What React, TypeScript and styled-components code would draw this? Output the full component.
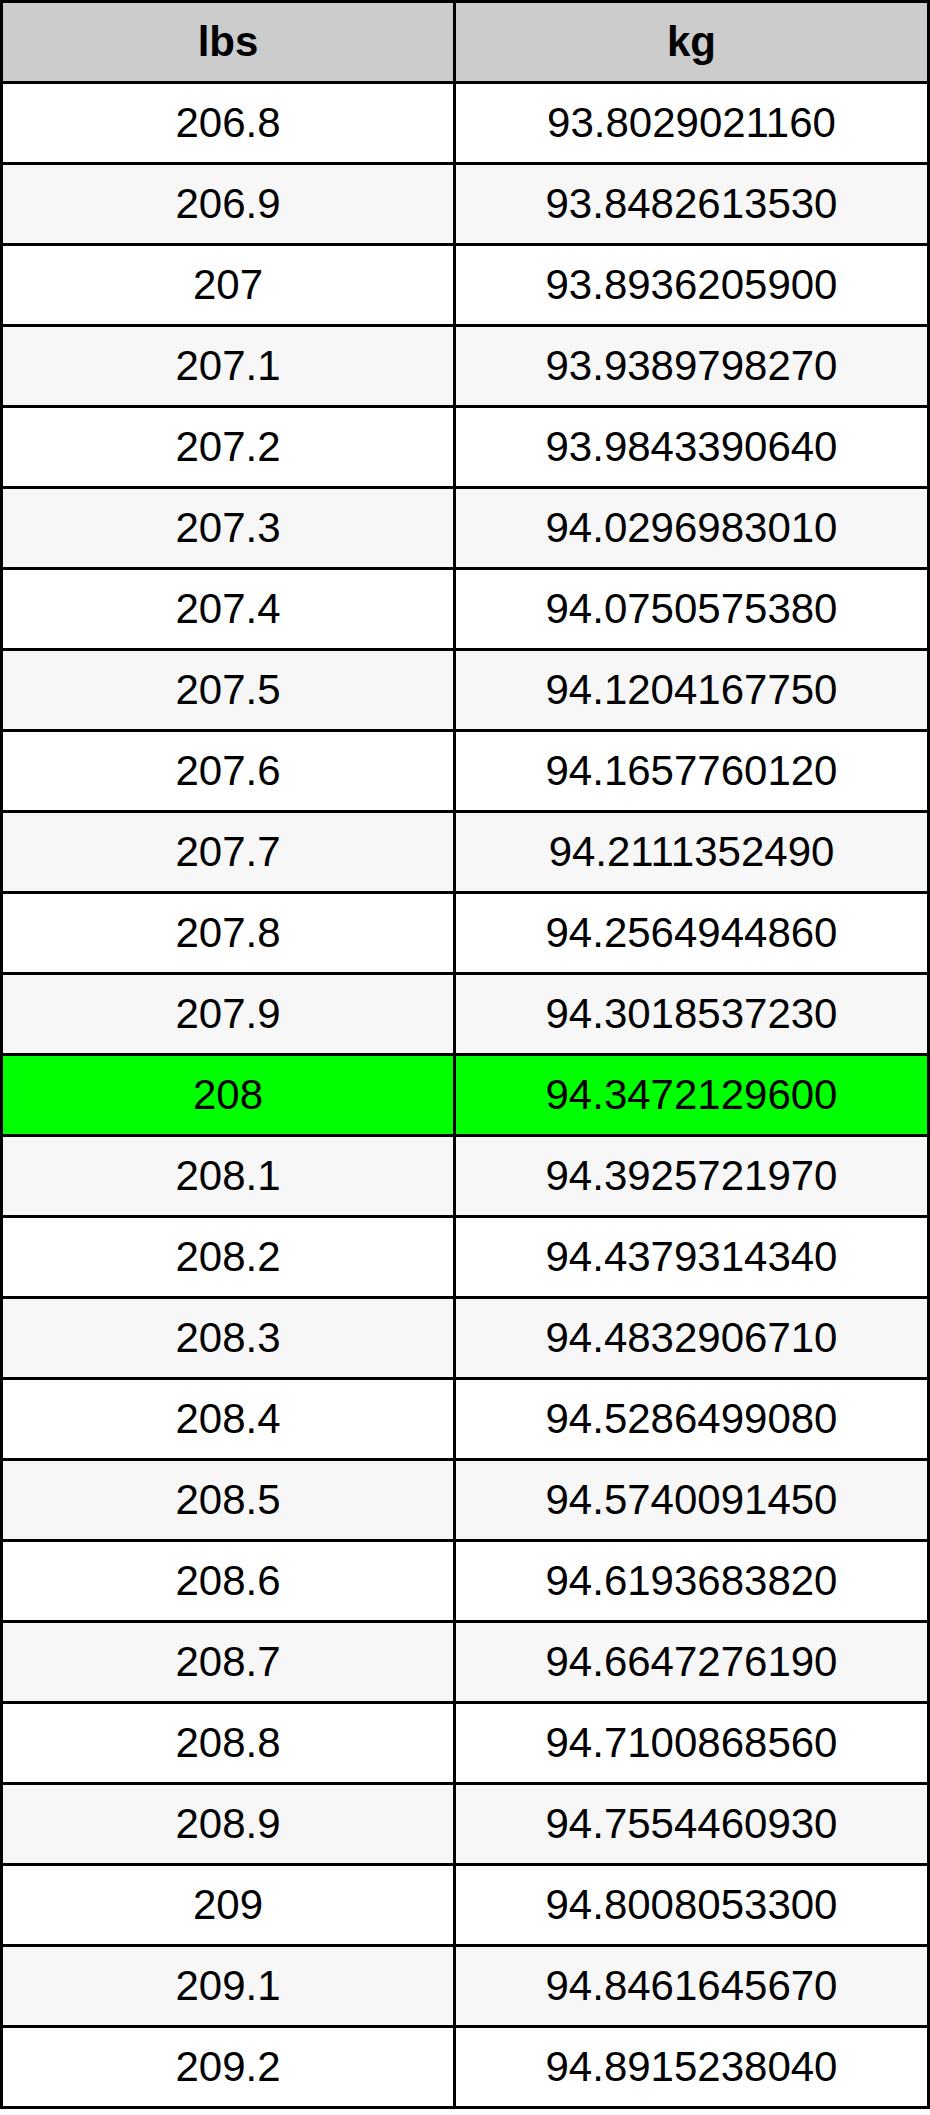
import { createGlobalStyle } from 'styled-components';
import styled from 'styled-components';

const GlobalStyle = createGlobalStyle`
  html, body {
    margin: 0;
    padding: 0;
    background: #ffffff;
  }
  body {
    font-family: "Liberation Sans", Arial, sans-serif;
  }
`;

const Table = styled.table`
  width: 930px;
  border-collapse: collapse;
  table-layout: fixed;
  border: 3px solid #000;
  font-family: "Liberation Sans", Arial, sans-serif;
  font-size: 42px;
  color: #000;
`;

const HeadCell = styled.th`
  height: 78px;
  padding: 0;
  border: 3px solid #000;
  background-color: #cccccc;
  font-weight: bold;
  text-align: center;
  vertical-align: middle;
`;

const Row = styled.tr<{ $striped: boolean; $highlight: boolean }>`
  background-color: ${(p) => (p.$highlight ? '#00ff00' : p.$striped ? '#f7f7f7' : '#ffffff')};
`;

const Cell = styled.td`
  height: 78px;
  padding: 0;
  border: 3px solid #000;
  text-align: center;
  vertical-align: middle;
  font-weight: normal;
`;

const rows: [string, string][] = [
  ['206.8', '93.8029021160'],
  ['206.9', '93.8482613530'],
  ['207', '93.8936205900'],
  ['207.1', '93.9389798270'],
  ['207.2', '93.9843390640'],
  ['207.3', '94.0296983010'],
  ['207.4', '94.0750575380'],
  ['207.5', '94.1204167750'],
  ['207.6', '94.1657760120'],
  ['207.7', '94.2111352490'],
  ['207.8', '94.2564944860'],
  ['207.9', '94.3018537230'],
  ['208', '94.3472129600'],
  ['208.1', '94.3925721970'],
  ['208.2', '94.4379314340'],
  ['208.3', '94.4832906710'],
  ['208.4', '94.5286499080'],
  ['208.5', '94.5740091450'],
  ['208.6', '94.6193683820'],
  ['208.7', '94.6647276190'],
  ['208.8', '94.7100868560'],
  ['208.9', '94.7554460930'],
  ['209', '94.8008053300'],
  ['209.1', '94.8461645670'],
  ['209.2', '94.8915238040'],
];

export default function App() {
  return (
    <>
      <GlobalStyle />
      <Table>
        <colgroup>
          <col style={{ width: '453px' }} />
          <col />
        </colgroup>
        <thead>
          <tr>
            <HeadCell>lbs</HeadCell>
            <HeadCell>kg</HeadCell>
          </tr>
        </thead>
        <tbody>
          {rows.map(([lbs, kg], i) => (
            <Row key={lbs} $striped={i % 2 === 1} $highlight={lbs === '208'}>
              <Cell>{lbs}</Cell>
              <Cell>{kg}</Cell>
            </Row>
          ))}
        </tbody>
      </Table>
    </>
  );
}
